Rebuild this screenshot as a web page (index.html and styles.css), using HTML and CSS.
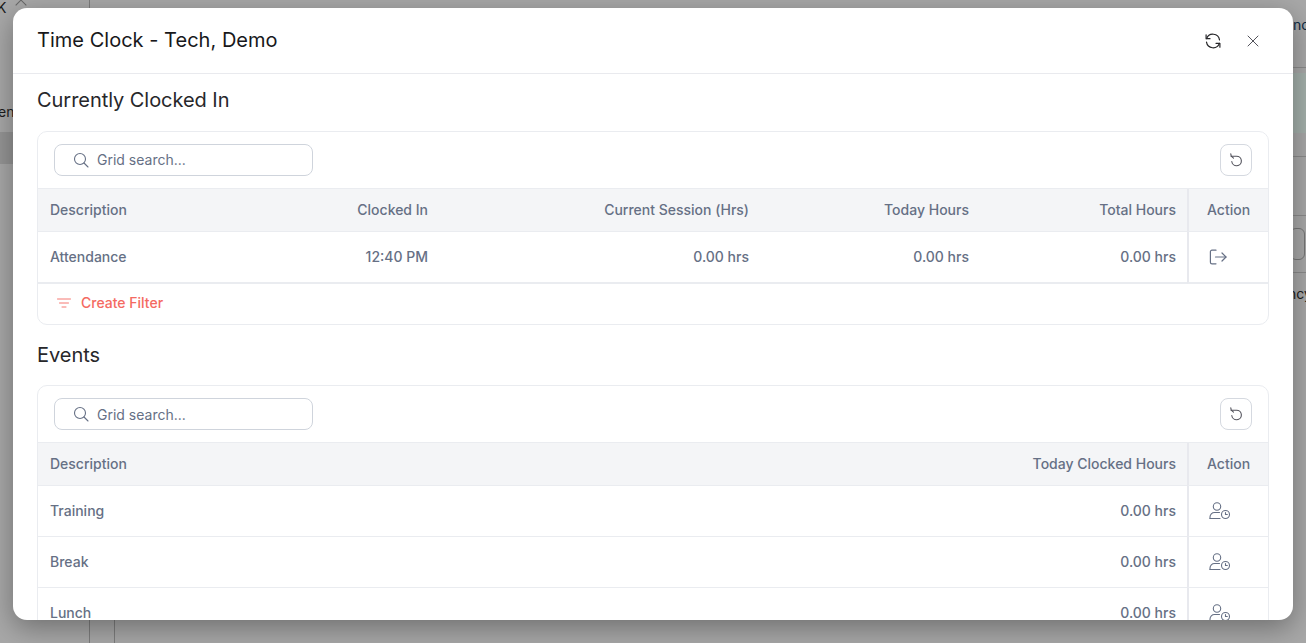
FILE: index.html
```html
<!DOCTYPE html>
<html lang="en">
<head>
<meta charset="utf-8">
<title>Time Clock</title>
<link rel="stylesheet" href="styles.css">
</head>
<body>
<div class="backdrop">
  <span class="bg-text bg-k">K</span>
  <span class="bg-caret"></span>
  <span class="bg-text bg-en">en</span>
  <span class="bg-text bg-nc">nc</span>
  <span class="bg-text bg-ncy">ncy</span>
  <span class="bg-rowband"></span>
  <span class="bg-band-right"></span>
  <span class="bg-hline bg-h1"></span>
  <span class="bg-hline bg-h2"></span>
  <span class="bg-hline bg-h3"></span>
  <span class="bg-hline bg-h4"></span>
  <span class="bg-line bg-v1"></span>
  <span class="bg-line bg-v2"></span>
  <span class="bg-btn"></span>
</div>
<section class="modal">
  <header class="modal-head">
    <h1 class="modal-title">Time Clock - Tech, Demo</h1>
    <div class="modal-actions">
      <svg width="16" height="16" viewBox="0 0 16 16" fill="none" stroke="#27272a" stroke-width="1.2" stroke-linecap="round" stroke-linejoin="round"><path d="M1.600 5.600A6.700 6.700 0 0 1 14.500 6.800"/><path d="M1.100 1.800v3.900H5"/><path d="M14.400 10.400A6.700 6.700 0 0 1 1.500 9.200"/><path d="M14.900 14.200v-3.900H11"/></svg>
      <svg width="12" height="12" viewBox="0 0 12 12" fill="none" stroke="#52525b" stroke-width="1" stroke-linecap="round"><path d="M1 1l10 10M11 1L1 11"/></svg>
    </div>
  </header>
  <div class="modal-body">
    <h2 class="section-title">Currently Clocked In</h2>
    <div class="card">
      <div class="toolbar">
        <label class="search">
          <svg width="16" height="16" viewBox="0 0 16 16" fill="none" stroke="#667085" stroke-width="1.1" stroke-linecap="round"><circle cx="7" cy="7" r="5.500"/><path d="M11 11l4 4"/></svg>
          <span>Grid search...</span>
        </label>
        <button class="reset" type="button" aria-label="Reset">
          <svg width="14" height="14" viewBox="0 0 14 14" fill="none" stroke="#52525b" stroke-width="1.100" stroke-linecap="round" stroke-linejoin="round"><path d="M2.200 3.200H7.500A4.800 4.800 0 1 1 2.800 8.500"/><path d="M1.800 .8l.4 2.400 2.300 1.900"/></svg>
        </button>
      </div>
      <div class="grid grid-clock">
        <div class="th">Description</div>
        <div class="th num">Clocked In</div>
        <div class="th num">Current Session (Hrs)</div>
        <div class="th num">Today Hours</div>
        <div class="th num last">Total Hours</div>
        <div class="th act">Action</div>
        <div class="td">Attendance</div>
        <div class="td num">12:40 PM</div>
        <div class="td num">0.00 hrs</div>
        <div class="td num">0.00 hrs</div>
        <div class="td num last">0.00 hrs</div>
        <div class="td act">
          <svg width="18" height="16" viewBox="0 0 18 16" fill="none" stroke="#667085" stroke-width="1.200" stroke-linecap="round" stroke-linejoin="round"><path d="M7 1.200H3a1.600 1.600 0 0 0-1.600 1.600v10.400A1.600 1.600 0 0 0 3 14.800H7"/><path d="M6.500 8h10.500"/><path d="M13 4l4 4-4 4"/></svg>
        </div>
      </div>
      <div class="filter-bar">
        <svg width="14" height="10" viewBox="0 0 14 10" fill="none" stroke="#f46a62" stroke-width=".9" stroke-linecap="round"><path d="M.5 1h13M2.500 5h9M5 9h4"/></svg>
        <span>Create Filter</span>
      </div>
    </div>
    <h2 class="section-title section-events">Events</h2>
    <div class="card card-open">
      <div class="toolbar">
        <label class="search search-low">
          <svg width="16" height="16" viewBox="0 0 16 16" fill="none" stroke="#667085" stroke-width="1.1" stroke-linecap="round"><circle cx="7" cy="7" r="5.500"/><path d="M11 11l4 4"/></svg>
          <span>Grid search...</span>
        </label>
        <button class="reset" type="button" aria-label="Reset">
          <svg width="14" height="14" viewBox="0 0 14 14" fill="none" stroke="#52525b" stroke-width="1.100" stroke-linecap="round" stroke-linejoin="round"><path d="M2.200 3.200H7.500A4.800 4.800 0 1 1 2.800 8.500"/><path d="M1.800 .8l.4 2.400 2.300 1.900"/></svg>
        </button>
      </div>
      <div class="grid grid-events">
        <div class="th">Description</div>
        <div class="th num last">Today Clocked Hours</div>
        <div class="th act">Action</div>
        <div class="td">Training</div>
        <div class="td num last">0.00 hrs</div>
        <div class="td act"><svg width="22" height="18" viewBox="0 0 22 18" fill="none" stroke="#667085" stroke-width="1.100" stroke-linecap="round"><circle cx="8" cy="4.500" r="3.700"/><path d="M1 16.500v-1.500a4.500 4.500 0 0 1 4.500-4.500h5"/><path d="M1 16.500h10"/><circle cx="16.500" cy="12.500" r="4"/><path d="M16.500 10.500v2h1.800"/></svg></div>
        <div class="td">Break</div>
        <div class="td num last">0.00 hrs</div>
        <div class="td act"><svg width="22" height="18" viewBox="0 0 22 18" fill="none" stroke="#667085" stroke-width="1.100" stroke-linecap="round"><circle cx="8" cy="4.500" r="3.700"/><path d="M1 16.500v-1.500a4.500 4.500 0 0 1 4.500-4.500h5"/><path d="M1 16.500h10"/><circle cx="16.500" cy="12.500" r="4"/><path d="M16.500 10.500v2h1.800"/></svg></div>
        <div class="td">Lunch</div>
        <div class="td num last">0.00 hrs</div>
        <div class="td act"><svg width="22" height="18" viewBox="0 0 22 18" fill="none" stroke="#667085" stroke-width="1.100" stroke-linecap="round"><circle cx="8" cy="4.500" r="3.700"/><path d="M1 16.500v-1.500a4.500 4.500 0 0 1 4.500-4.500h5"/><path d="M1 16.500h10"/><circle cx="16.500" cy="12.500" r="4"/><path d="M16.500 10.500v2h1.800"/></svg></div>
      </div>
    </div>
  </div>
</section>
</body>
</html>
```

FILE: styles.css
```css
* { box-sizing: border-box; }

html, body {
  margin: 0;
  height: 100%;
  overflow: hidden;
}

body {
  background: #a8a8a8;
  font-family: Inter, "Liberation Sans", sans-serif;
  color: #667085;
}

.backdrop {
  position: fixed;
  inset: 0;
  background: #a8a8a8;
}

.bg-text {
  position: absolute;
  font-size: 14px;
  line-height: 17px;
  color: #1c1c1c;
}

.bg-k { left: -3px; top: -1px; }
.bg-en { left: -2px; top: 103px; }
.bg-nc { left: 1293px; top: 16px; color: #0e2a45; }
.bg-ncy { left: 1288px; top: 285px; }

.bg-caret {
  position: absolute;
  left: 17px;
  top: 1px;
  width: 8px;
  height: 8px;
  border-left: 1px solid #666;
  border-top: 1px solid #666;
  transform: rotate(45deg);
}

.bg-rowband {
  position: absolute;
  left: 0;
  top: 132px;
  width: 13px;
  height: 32px;
  background: #959595;
}

.bg-band-right {
  position: absolute;
  left: 1293px;
  top: 73px;
  width: 13px;
  height: 60px;
  background: #a4b0ab;
}

.bg-hline {
  position: absolute;
  left: 1293px;
  width: 13px;
  height: 1px;
  background: #8b8b8b;
}

.bg-h1 { top: 67px; }
.bg-h2 { top: 156px; }
.bg-h3 { top: 215px; }
.bg-h4 { top: 272px; }

.bg-line {
  position: absolute;
  background: #7d7d7d;
  width: 1px;
  top: 0;
  bottom: 0;
}

.bg-v1 { left: 89px; }
.bg-v2 { left: 114px; top: 620px; }

.bg-btn {
  position: absolute;
  left: 1290px;
  top: 228px;
  width: 15px;
  height: 32px;
  border: 1px solid #767676;
  border-radius: 6px;
}

.modal {
  position: fixed;
  left: 13px;
  top: 8px;
  width: 1280px;
  height: 612px;
  background: #fff;
  border-radius: 14px;
  overflow: hidden;
  box-shadow: 0 8px 28px rgba(0, 0, 0, .34);
  display: flex;
  flex-direction: column;
}

.modal-head {
  height: 66px;
  flex: none;
  display: flex;
  align-items: center;
  justify-content: space-between;
  padding: 0 34px 2px 24px;
  border-bottom: 1px solid #e9eaee;
}

.modal-title {
  margin: 0;
  font-size: 20px;
  line-height: 28px;
  font-weight: 400;
  letter-spacing: .02px;
  color: #18181b;
}

.modal-actions {
  display: flex;
  align-items: center;
  gap: 26px;
  margin-top: 2px;
}

.modal-body {
  padding: 0 24px;
  flex: 1;
  overflow: hidden;
}

.section-title {
  margin: 0;
  padding-top: 13px;
  font-size: 20px;
  line-height: 26px;
  font-weight: 400;
  letter-spacing: -.05px;
  color: #27272a;
}

.section-events {
  padding-top: 17px;
}

.card {
  margin-top: 18px;
  border: 1px solid #eaecf0;
  border-radius: 10px;
  overflow: hidden;
}

.section-events + .card {
  margin-top: 17px;
}

.toolbar {
  height: 57px;
  padding: 0 16px;
  display: flex;
  align-items: center;
  justify-content: space-between;
  border-bottom: 1px solid #eaecf0;
}

.search {
  width: 259px;
  height: 32px;
  padding: 0 18px 1px;
  display: flex;
  align-items: center;
  gap: 8px;
  border: 1px solid #cfd4dc;
  border-radius: 8px;
  font-size: 14px;
  color: #667085;
}

.search-low { padding-bottom: 0; }

.reset {
  width: 32px;
  height: 32px;
  padding: 0;
  display: flex;
  align-items: center;
  justify-content: center;
  background: #fff;
  border: 1px solid #d5d9e0;
  border-radius: 8px;
}

.grid {
  display: grid;
  font-size: 14px;
}

.grid-clock {
  grid-template-columns: 212px 190px 321px 220px 206px 81px;
}

.grid-events {
  grid-template-columns: 943px 206px 81px;
}

.th, .td {
  display: flex;
  align-items: center;
  padding: 0 12px 2px;
  border-bottom: 1px solid #eaecf0;
  color: #667085;
}

.th {
  height: 43px;
  background: #f4f5f7;
  font-weight: 500;
}

.td {
  height: 51px;
  font-weight: 500;
}

.num { justify-content: flex-end; }

.last { padding-right: 11px; }

.th.act, .td.act {
  padding-left: 18px;
  border-left: 2px solid #e8e9ee;
}

.td.act { padding-left: 20px; padding-bottom: 0; }

.grid-clock .td { height: 52px; border-bottom-width: 2px; }

.filter-bar {
  height: 40px;
  padding: 0 19px 3px;
  display: flex;
  align-items: center;
  gap: 10px;
  font-size: 14px;
  font-weight: 500;
  color: #f46a62;
}
```
